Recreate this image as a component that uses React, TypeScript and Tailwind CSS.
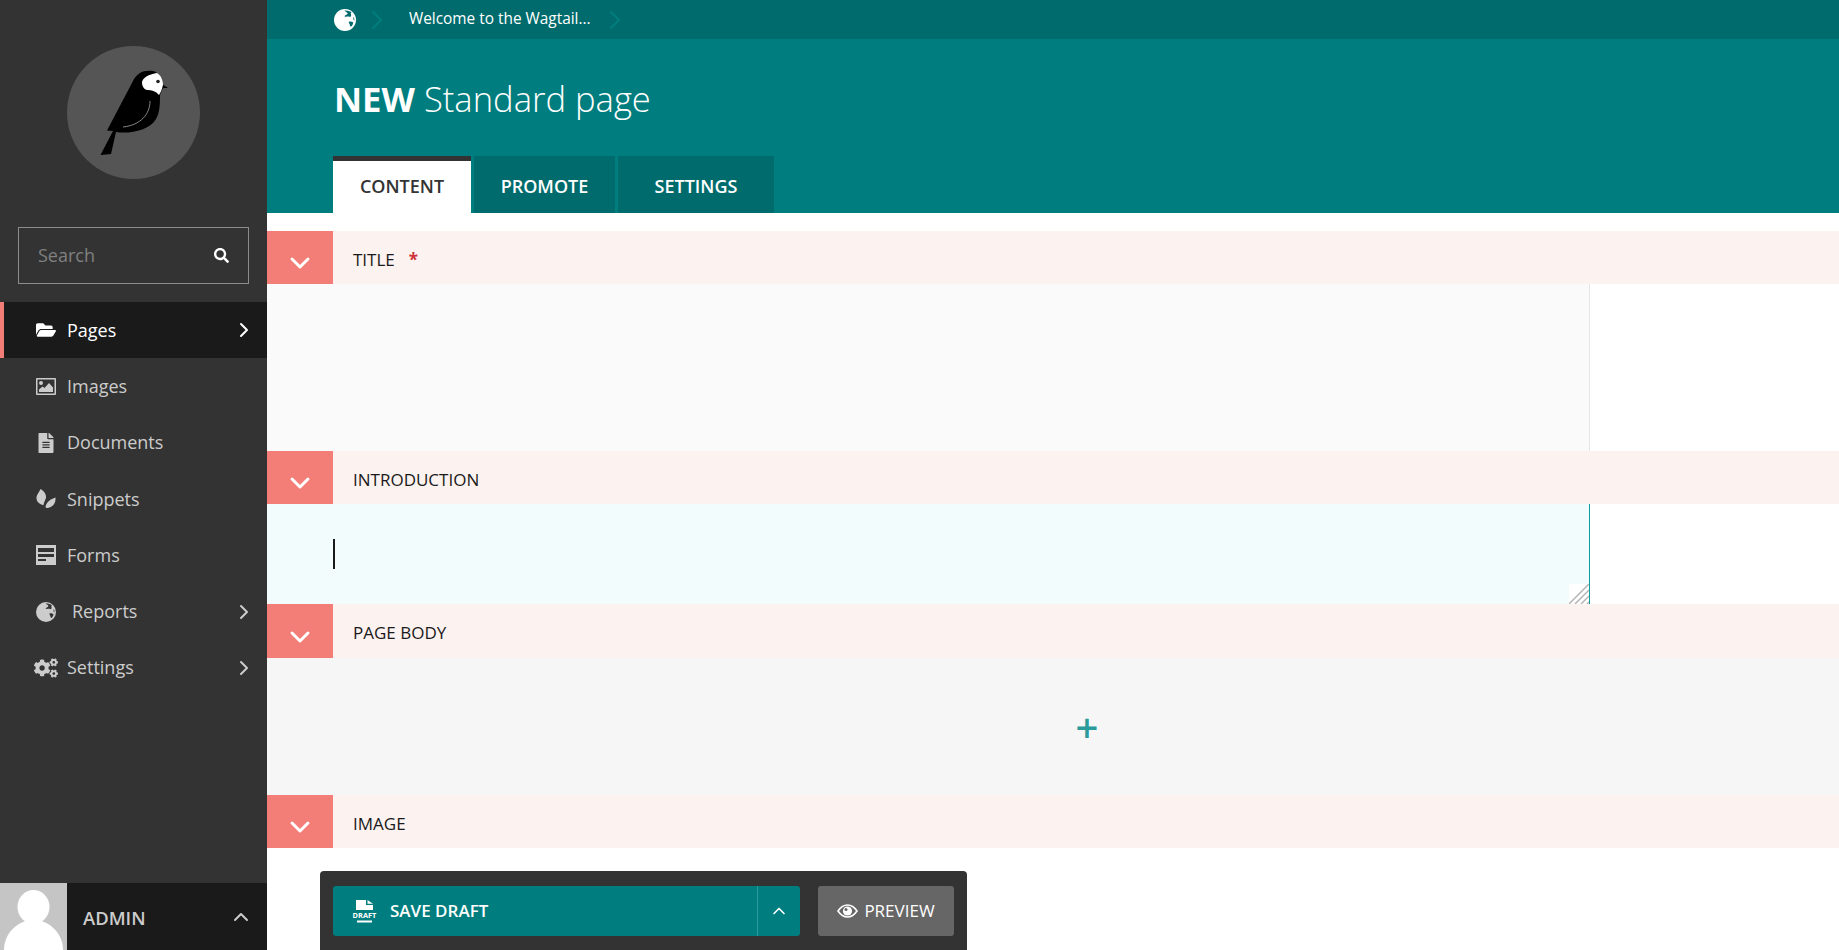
import { ChevronDown, ChevronRight, ChevronUp } from "lucide-react"
import { FaCogs, FaFileAlt, FaFolderOpen, FaSearch } from "react-icons/fa"
import type { ReactNode } from "react"

// Wagtail bird, drawn in page coordinates
function WagtailLogo() {
  return (
    <svg viewBox="98 68 70 88" className="w-[70px] h-[88px]">
      <path d="M99.5 154 L110 153 L115 131 C128 133 148 130 155 118 C159 111 159 102 159 94 L162 87 L167 87 L161 83 C160 76 157 71 152 70 C142 69 136 72 132 80 L106 129.5 L112 130 Z" fill="#000" />
      <path d="M156 72 C160 74 162 80 162 84 C161 88 160 91 158 94 C155 90 150 89 146 89 C142 88 141 84 141 81 C142 76 149 73 156 72 Z" fill="#fff" />
      <circle cx="157" cy="80.5" r="1.8" fill="#222" />
      <path d="M149 100 C149 113 140 124 122 126" fill="none" stroke="#bbb" strokeWidth="0.7" />
    </svg>
  )
}

function GlobeIcon({ size, cut }: { size: string; cut: string }) {
  return (
    <svg viewBox="0 0 20 20" className={size}>
      <circle cx="10" cy="10" r="10" fill="currentColor" />
      <path className={cut} d="M9.5 1.5 C11 2.5 12 3 12.5 4 C11.5 5.5 10 5.5 9.5 6.5 C10.5 7.5 12.5 6.5 14 7 C15 7.5 16 6.5 15.5 5 C15 4 15.5 3.5 16 3.2 C14 1.8 11.5 1.2 9.5 1.5 Z" />
      <path className={cut} d="M13.5 11.5 C15 11 16.5 11.5 17.5 12.3 C17.5 13.5 16.5 15.5 15.5 16 C14.8 16 14.5 15 14.3 14 C14 13 13.2 12.3 13.5 11.5 Z" />
      <path className={cut} d="M17.8 7 C18.4 8.2 18.6 9.6 18.4 10.6 C17.6 10 17.3 8.2 17.8 7 Z" />
    </svg>
  )
}

function ImageIcon() {
  return (
    <svg viewBox="0 0 20 17" className="w-5 h-[17px]" fill="currentColor">
      <path fillRule="evenodd" d="M1 0 H19 A1 1 0 0 1 20 1 V16 A1 1 0 0 1 19 17 H1 A1 1 0 0 1 0 16 V1 A1 1 0 0 1 1 0 Z M1.5 1.5 V15.5 H18.5 V1.5 Z" />
      <circle cx="5" cy="5" r="2" />
      <path d="M3 14 V11.5 L6.5 8.5 L8.5 10 L13 5 L17 9.5 V14 Z" />
    </svg>
  )
}

function LeafIcon() {
  return (
    <svg viewBox="0 0 20 20" className="w-5 h-5" fill="currentColor">
      <path d="M4.5 0 C8 2 10.5 5 10 9 C9.5 10.5 8 13 7.5 16 C3 15.5 0 12 0.5 8 C1 5 3.5 3 4.5 0 Z" />
      <path d="M19.5 8.5 C20 13.5 17 18.5 11.5 19 C10.5 19 9.5 18.5 9.5 17.5 C10.5 13 14.5 10 19.5 8.5 Z" />
    </svg>
  )
}

function FormIcon() {
  return (
    <svg viewBox="0 0 20 20" className="w-5 h-5" fill="currentColor" fillRule="evenodd">
      <path d="M0 0 H20 V20 H0 Z M2 3 V7 H18 V3 Z M2 9 V12 H18 V9 Z M2 14 V16 H10 V14 Z" />
    </svg>
  )
}

function DraftIcon() {
  return (
    <svg viewBox="0 0 25 23" className="w-[25px] h-[23px]" fill="#fff">
      <path d="M4 0 H14 V5 H21 V10 H4 Z M15.5 0 L21 3.8 H15.5 Z" />
      <text x="12.5" y="18" textAnchor="middle" fontSize="7.4" fontWeight="700" fontFamily="'Open Sans', sans-serif">DRAFT</text>
      <rect x="5" y="20.5" width="15" height="2" />
    </svg>
  )
}

function EyeIcon() {
  return (
    <svg viewBox="0 0 21 14" className="w-[21px] h-[14px]" fill="none" stroke="#fff">
      <path d="M1 7 C4 2.5 7 1 10.5 1 C14 1 17 2.5 20 7 C17 11.5 14 13 10.5 13 C7 13 4 11.5 1 7 Z" strokeWidth="1.6" />
      <circle cx="10.5" cy="7" r="4.6" fill="#fff" stroke="none" />
      <circle cx="9" cy="5.5" r="1.5" fill="#666666" stroke="none" />
    </svg>
  )
}

type NavItem = { label: string; icon: ReactNode; arrow?: boolean; active?: boolean; labelClass?: string }

const navItems: NavItem[] = [
  { label: "Pages", icon: <FaFolderOpen className="w-5 h-5" />, arrow: true, active: true },
  { label: "Images", icon: <ImageIcon /> },
  { label: "Documents", icon: <FaFileAlt className="w-5 h-5" /> },
  { label: "Snippets", icon: <LeafIcon /> },
  { label: "Forms", icon: <FormIcon /> },
  { label: "Reports", icon: <GlobeIcon size="w-5 h-5" cut="fill-[#333333]" />, arrow: true, labelClass: "ml-[5px]" },
  { label: "Settings", icon: <FaCogs className="w-6 h-6 -ml-[2px]" />, arrow: true },
]

function Sidebar() {
  return (
    <aside className="w-[267px] shrink-0 h-[950px] bg-[#333333] flex flex-col">
      <div className="pt-[46px] flex justify-center">
        <div className="w-[133px] h-[133px] rounded-full bg-[#555555] flex items-center justify-center">
          <WagtailLogo />
        </div>
      </div>
      <div className="mt-[48px] mx-[18px] h-[57px] border border-[#8c8c8c] flex items-center pl-[19px] pr-[19px]">
        <span className="flex-1 text-[18px] text-[#808080]">Search</span>
        <FaSearch className="w-[15px] h-[15px] text-white" />
      </div>
      <nav className="mt-[18px] flex flex-col">
        {navItems.map((item) => (
          <div
            key={item.label}
            className={`h-[56.3px] flex items-center pr-[14px] ${
              item.active ? "bg-[#1a1a1a] text-white border-l-4 border-[#f37e77] pl-8" : "text-[#cccccc] pl-9"
            }`}
          >
            <span className="w-[31px] h-6 shrink-0 flex items-center">{item.icon}</span>
            <span className={`flex-1 text-[18px] ${item.labelClass ?? ""}`}>{item.label}</span>
            {item.arrow && <ChevronRight className="w-6 h-6 -mr-[3px]" strokeWidth={2} />}
          </div>
        ))}
      </nav>
      <div className="mt-auto h-[67px] bg-[#1a1a1a] flex items-center">
        <div className="w-[67px] h-[67px] bg-[#c5c5c5] overflow-hidden flex justify-center">
          <svg viewBox="0 0 67 67" className="w-[67px] h-[67px]" fill="#fff">
            <ellipse cx="33.5" cy="24" rx="16" ry="17" />
            <path d="M4 67 C4 50 18 37 33.5 37 C49 37 63 50 63 67 Z" />
          </svg>
        </div>
        <span className="ml-4 flex-1 text-[18.4px] font-semibold text-[#cccccc] pt-[3px]">ADMIN</span>
        <ChevronUp className="w-6 h-6 mr-[14px] text-[#cccccc]" strokeWidth={2} />
      </div>
    </aside>
  )
}

function PanelHeader({ title, required, tall }: { title: string; required?: boolean; tall?: boolean }) {
  return (
    <div className={`${tall ? "h-[54px]" : "h-[53px]"} bg-[#fcf2f0] flex`}>
      <div className="w-[66px] bg-[#f37e77] flex items-end justify-center pb-[5px] text-white">
        <ChevronDown className="w-8 h-8" strokeWidth={2.2} />
      </div>
      <div className="pl-5 pt-[4px] flex items-center text-[17px] text-[#1a1a1a]">
        {title}
        {required && <span className="ml-[14px] text-[#cd3238] font-bold">*</span>}
      </div>
    </div>
  )
}

export default function App() {
  return (
    <div className="flex h-[950px] w-[1839px] overflow-hidden bg-white font-['Open_Sans',sans-serif]">
      <Sidebar />
      <main className="flex-1 flex flex-col relative">
        <div className="h-[39px] bg-[#006b6c] flex items-center pl-[67px] text-white">
          <GlobeIcon size="w-[22px] h-[22px]" cut="fill-[#006b6c]" />
          <ChevronRight className="w-8 h-8 ml-[5px] text-[#007d7e]" strokeWidth={1.5} />
          <span className="ml-[16px] text-[15.4px] -mt-[2px]">Welcome to the Wagtail...</span>
          <ChevronRight className="w-8 h-8 ml-[8px] text-[#007d7e]" strokeWidth={1.5} />
        </div>
        <header className="h-[174px] bg-[#007d7e] flex flex-col justify-between pl-[66px] text-white">
          <h1 className="mt-[36px] text-[34.6px] leading-[48px] font-light pl-px">
            <span className="font-bold">NEW</span> Standard page
          </h1>
          <div className="flex gap-[3px] text-[18px] font-semibold">
            <div className="w-[138px] h-[57px] pb-[2px] bg-white border-t-[5px] border-[#333333] text-[#333333] flex items-center justify-center">CONTENT</div>
            <div className="w-[141px] h-[57px] pb-[2px] bg-[#006b6c] border-t-[5px] border-[#006b6c] flex items-center justify-center">PROMOTE</div>
            <div className="w-[156px] h-[57px] pb-[2px] bg-[#006b6c] border-t-[5px] border-[#006b6c] flex items-center justify-center">SETTINGS</div>
          </div>
        </header>

        <div className="mt-[18px]">
          <PanelHeader title="TITLE" required />
          <div className="h-[167px] w-[1323px] bg-[#fafafa] border-r border-[#e6e6e6]" />
          <PanelHeader title="INTRODUCTION" />
          <div className="h-[100px] w-[1323px] bg-[#f2fcfc] border-r border-[#0f9b9b] relative flex items-center pl-[66px]">
            <div className="w-[2px] h-[30px] bg-[#1a1a1a]" />
            <div className="absolute right-0 bottom-0 w-5 h-5 bg-white overflow-hidden">
              <svg viewBox="0 0 20 20" className="w-5 h-5" stroke="#b5b5b5" strokeWidth="1.5">
                <path d="M0 20 L20 0 M6 20 L20 6 M12 20 L20 12 M18 20 L20 18" />
              </svg>
            </div>
          </div>
          <PanelHeader title="PAGE BODY" tall />
          <div className="h-[137px] bg-[#f6f6f6] flex items-center justify-center pl-[68px]">
            <span className="text-[40px] leading-none font-semibold text-[#2b9a9b]">+</span>
          </div>
          <PanelHeader title="IMAGE" />
        </div>

        {/* floating action bar */}
        <div className="absolute left-[53px] top-[871px] w-[647px] h-[79px] bg-[#333333] rounded-t-[4px] flex pl-[13px] pt-[15px] gap-[18px]">
          <div className="w-[467px] h-[50px] bg-[#007d7e] rounded-[3px] flex items-center text-white">
            <div className="flex-1 flex items-center pl-[19px] gap-[13px] text-[17px] font-semibold">
              <DraftIcon />
              <span>SAVE DRAFT</span>
            </div>
            <div className="w-[43px] h-full border-l border-[#2b9a9b] flex items-center justify-center">
              <ChevronUp className="w-5 h-5" strokeWidth={2} />
            </div>
          </div>
          <div className="w-[136px] h-[50px] bg-[#666666] rounded-[3px] flex items-center justify-center gap-[6px] text-white text-[17px]">
            <EyeIcon />
            <span>PREVIEW</span>
          </div>
        </div>
      </main>
    </div>
  )
}
